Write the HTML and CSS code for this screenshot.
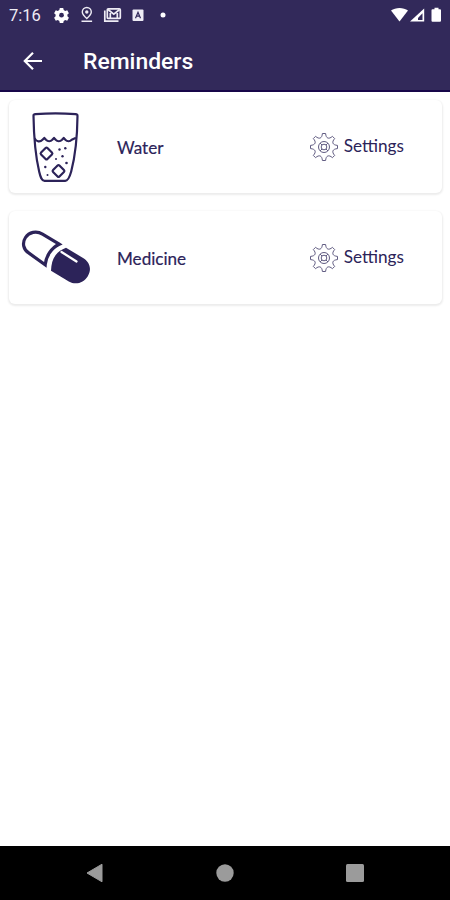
FILE: index.html
```html
<!DOCTYPE html>
<html lang="en">
<head>
<meta charset="UTF-8">
<meta name="viewport" content="width=device-width, initial-scale=1.0">
<title>Reminders</title>
<link rel="stylesheet" href="styles.css">
</head>
<body>
<header class="header">
  <div class="status-bar">
    <span class="time">7:16</span>
    <svg class="status-left" width="120" height="20" viewBox="0 0 120 20">
      <!-- gear -->
      <g transform="translate(8.5 10)">
        <path d="M-1.7-7h3.4l.5 2 1.500.9 2-.7 1.700 3-1.500 1.400v1.700l1.500 1.400-1.700 3-2-.7-1.500.9-.5 2h-3.400l-.5-2-1.500-.9-2 .7-1.700-3 1.500-1.400v-1.700l-1.500-1.400 1.700-3 2 .7 1.500-.9z" fill="#fff"/>
        <circle r="2.400" cy=".2" fill="#32295a"/>
      </g>
      <!-- location -->
      <g fill="none" stroke="#eeecf5" stroke-width="1.400">
        <path d="M33.800 13.600C31 11 29.300 9 29.300 7a4.500 4.500 0 0 1 9 0c0 2-1.700 4-4.500 6.600zM28.500 16.200h10.600"/>
        <circle cx="33.800" cy="7" r="1" fill="#eeecf5"/>
      </g>
      <!-- mail / picture stack -->
      <g fill="none" stroke="#eeecf5" stroke-width="1.700">
        <rect x="54.300" y="3.800" width="13" height="9.600" rx="1"/>
        <path d="M55 4.500l5.800 4.700 5.800-4.700M57.300 13V8M64.300 13V8"/>
        <path d="M51.800 5.500v10.700h13.700"/>
      </g>
      <!-- letter box -->
      <rect x="79.500" y="4.500" width="11" height="11.500" rx="1" fill="#eeecf5"/>
      <path d="M82.500 13.200l2.500-6 2.500 6M83.400 11.200h3.200" fill="none" stroke="#32295a" stroke-width="1.200"/>
      <circle cx="110" cy="10" r="2.500" fill="#fff"/>
    </svg>
    <svg class="status-right" width="52" height="18" viewBox="0 0 52 18" fill="#fff">
      <path d="M0 4.500C4.500 1 12.500 1 17 4.500L8.500 15.500z"/>
      <path d="M33.200 2.500v13H19z"/>
      <path d="M31.500 7.200v6.700h-4.500v-2z" fill="#32295a"/>
      <path d="M43.500 1.800h4v1.400h1.500q1 0 1 1v10.500q0 1-1 1h-7.500q-1 0-1-1V4.200q0-1 1-1h2z"/>
    </svg>
  </div>
  <div class="app-bar">
    <svg class="back" width="22" height="20" viewBox="0 0 22 20">
      <path d="M20 10H3M11 1.800L2.800 10l8.200 8.200" fill="none" stroke="#fff" stroke-width="2.200"/>
    </svg>
    <h1>Reminders</h1>
  </div>
</header>

<main class="list">
  <div class="card">
    <svg class="icon" width="70" height="72" viewBox="21 111 70 72">
      <g fill="none" stroke="#2c2359" stroke-width="2.200" stroke-linecap="round" stroke-linejoin="round">
        <path d="M33.500 116c-.3-1.200.6-1.600 2-1.800 12-1.100 28-1.100 40 0 1.400.2 2.200.6 2 1.800-.2 19-2.500 41-6.300 55.500-1.500 5.500-3 9.300-6 9.300H44.500c-3 0-4-3.600-5.300-9C35.500 156 33.800 135 33.500 116z"/>
        <path d="M35 138.800c1.200 2.900 5.200 3.400 7.500 1l1.800-1.900 1.700 1.900c1.700 1.700 4.600 1.700 6.300 0l1.700-1.900 1.700 1.900c1.700 1.700 4.600 1.700 6.300 0l1.700-1.900 1.700 1.900c1.700 1.700 4.600 1.700 6.300 0l3.300-1.600"/>
        <rect x="42" y="149" width="9" height="9" rx="1.300" transform="rotate(45 46.500 153.500)"/>
        <rect x="54" y="166.500" width="9" height="9" rx="1.300" transform="rotate(45 58.500 171)"/>
      </g>
      <g fill="#2c2359">
        <circle cx="59.500" cy="149.500" r="1.200"/>
        <circle cx="65.300" cy="148.300" r="1.200"/>
        <circle cx="62.500" cy="156.300" r="1.200"/>
        <circle cx="56" cy="159" r="1"/>
        <circle cx="66.500" cy="163" r="1.300"/>
        <circle cx="45.300" cy="167" r="1.200"/>
        <circle cx="47.500" cy="175" r="1"/>
      </g>
    </svg>
    <span class="name">Water</span>
    <div class="settings">
      <svg class="gear" width="30" height="30" viewBox="-15 -15 30 30">
        <path d="M13.500-1.600V1.600C8.500 2 7.400 4.800 10.680 8.420L8.420 10.680C4.800 7.400 2 8.500 1.600 13.500H-1.600C-2 8.500-4.800 7.400-8.420 10.680L-10.680 8.420C-7.400 4.800-8.500 2-13.500 1.600V-1.600C-8.500-2-7.400-4.800-10.680-8.420L-8.420-10.680C-4.800-7.400-2-8.500-1.600-13.500H1.600C2-8.500 4.800-7.400 8.420-10.680L10.680-8.420C7.400-4.800 8.500-2 13.500-1.600Z"/>
        <circle r="5.500"/>
        <circle r="2.800"/>
        <path d="M-4-4l2 2M4-4l-2 2M-4 4l2-2M4 4l-2-2"/>
      </svg>
      <span class="label">Settings</span>
    </div>
  </div>

  <div class="card">
    <svg class="icon" width="70" height="72" viewBox="21 221.500 70 72">
      <path d="M59.200 243.700L42.500 233.600c-6-3.700-13.500-2-17 3.400-3.600 5.400-2.200 12.200 3.500 15.700l16.200 11.500c.6-7.700 5.800-16.900 14-20.500z" fill="none" stroke="#2c2359" stroke-width="3.200"/>
      <path d="M66 247.300l17.500 10.400c6.500 4 8.400 11.500 4.300 18-4 6.600-12 9.300-19 5.300L51 270.300c.3-6.500 1.500-11.500 4.500-15.500 2.800-3.500 6-5.800 10.500-7.500z" fill="#2c2359"/>
      <path d="M61.500 251.500l15 9.500" fill="none" stroke="#fff" stroke-width="2.300" stroke-linecap="round"/>
    </svg>
    <span class="name">Medicine</span>
    <div class="settings">
      <svg class="gear" width="30" height="30" viewBox="-15 -15 30 30">
        <path d="M13.500-1.600V1.600C8.500 2 7.400 4.800 10.680 8.420L8.420 10.680C4.800 7.400 2 8.500 1.600 13.500H-1.600C-2 8.500-4.800 7.400-8.420 10.680L-10.680 8.420C-7.400 4.800-8.500 2-13.500 1.600V-1.600C-8.500-2-7.400-4.800-10.680-8.420L-8.420-10.680C-4.800-7.400-2-8.500-1.600-13.500H1.600C2-8.500 4.800-7.400 8.420-10.680L10.680-8.420C7.400-4.800 8.500-2 13.500-1.600Z"/>
        <circle r="5.500"/>
        <circle r="2.800"/>
        <path d="M-4-4l2 2M4-4l-2 2M-4 4l2-2M4 4l-2-2"/>
      </svg>
      <span class="label">Settings</span>
    </div>
  </div>
</main>

<nav class="nav-bar">
  <svg width="18" height="20" viewBox="0 0 18 20"><path d="M1 10L16 1.200v17.600z" fill="#9b9b9b" stroke="#9b9b9b" stroke-linejoin="round"/></svg>
  <svg width="18" height="18" viewBox="0 0 18 18"><circle cx="9" cy="9" r="8.700" fill="#9b9b9b"/></svg>
  <svg width="18" height="18" viewBox="0 0 18 18"><rect width="18" height="18" rx="1.500" fill="#9b9b9b"/></svg>
</nav>
</body>
</html>
```

FILE: styles.css
```css
* {
  box-sizing: border-box;
}

body {
  margin: 0;
  height: 100vh;
  display: flex;
  flex-direction: column;
  background-color: #fff;
  font-family: Lato, sans-serif;
  color: #2c2359;
}

svg {
  display: block;
  flex: none;
}

.header {
  height: 92px;
  background-color: #32295a;
  border-bottom: 2px solid #170649;
  color: #fff;
  font-family: Roboto, sans-serif;
}

.status-bar {
  display: flex;
  align-items: center;
  height: 30px;
  padding: 0 7px 0 9px;
}

.time {
  width: 44px;
  font-size: 16.5px;
  color: #eeecf5;
}

.status-left {
  margin-top: -1px;
}

.status-right {
  margin-left: auto;
  margin-top: -1px;
}

.app-bar {
  display: flex;
  align-items: center;
  height: 61px;
  padding-left: 22px;
}

.back {
  margin-right: 39px;
}

h1 {
  margin: 2px 0 0;
  font-size: 22.9px;
  font-weight: 500;
}

.list {
  flex: 1;
  display: flex;
  flex-direction: column;
  gap: 18px;
  padding: 8px 8px 0 9px;
}

.card {
  display: flex;
  align-items: center;
  height: 93px;
  padding: 0 38px 0 12px;
  border-radius: 6px;
  background-color: #fff;
  box-shadow: 0 1px 2px 1px rgba(0, 0, 0, 0.08);
}

.name {
  margin: 1px 0 0 26px;
  font-size: 17.1px;
  -webkit-text-stroke: 0.2px #2c2359;
}

.settings {
  display: flex;
  align-items: center;
  gap: 5px;
  margin-left: auto;
  font-size: 17.2px;
}

.label {
  margin-top: -2px;
}

.gear {
  fill: none;
  stroke: #615c82;
  stroke-width: 1;
}

/* Android navigation buttons */
.nav-bar {
  display: flex;
  align-items: center;
  justify-content: space-between;
  height: 54px;
  padding: 0 86px;
  background-color: #000;
}
```
